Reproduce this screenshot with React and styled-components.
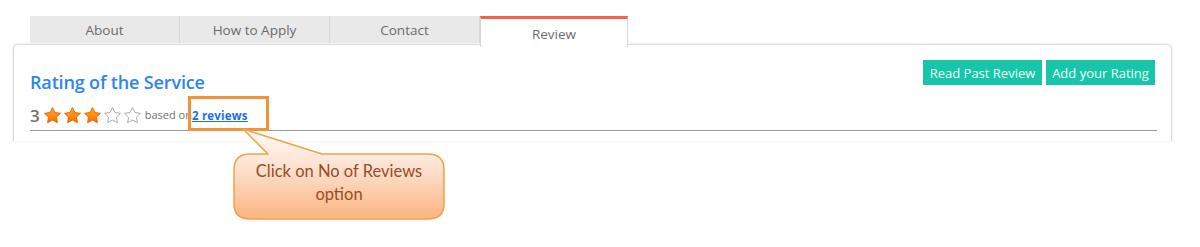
import React from 'react';
import styled, { createGlobalStyle } from 'styled-components';

const GlobalStyle = createGlobalStyle`
  html, body {
    margin: 0;
    padding: 0;
    background: #fff;
  }
  body {
    font-family: "Open Sans", "Noto Sans", sans-serif;
  }
`;

const Page = styled.div`
  position: relative;
  width: 1200px;
  height: 247px;
  padding-top: 16px;
  box-sizing: border-box;
  overflow: hidden;
`;

const Tabs = styled.div`
  display: flex;
  margin-left: 30px;
  height: 28px;
  position: relative;
  z-index: 2;
`;

const Tab = styled.div`
  width: ${p => (p.active ? '146px' : '149px')};
  height: ${p => (p.active ? '26px' : '27px')};
  box-sizing: content-box;
  display: flex;
  align-items: center;
  justify-content: center;
  font-size: 13.5px;
  color: #6b6b6b;
  background: ${p => (p.active ? '#fff' : '#e9e9e9')};
  border-right: 1px solid ${p => (p.active ? '#d6d6d6' : '#d9d9d9')};
  border-left: ${p => (p.active ? '1px solid #d6d6d6' : 'none')};
  border-top: ${p => (p.active ? '3px solid #f5614a' : 'none')};
  padding-top: ${p => (p.active ? '2px' : '0')};
  margin-bottom: ${p => (p.active ? '-1px' : '0')};
  &:last-child {
    border-right: 1px solid #d6d6d6;
  }
`;

const Panel = styled.div`
  margin-left: 13px;
  width: 1159px;
  height: 97px;
  box-sizing: border-box;
  background: #fff;
  border: 1px solid #dcdcdc;
  border-bottom: none;
  border-radius: 5px 5px 0 0;
  box-shadow: 0 0 3px rgba(0, 0, 0, 0.12);
  padding: 15px 16px 0 16px;
`;

const Header = styled.div`
  display: flex;
  justify-content: space-between;
  align-items: flex-start;
`;

const Title = styled.h2`
  margin: 10px 0 0;
  font-size: 18px;
  line-height: 24px;
  font-weight: 600;
  color: #2b84f5;
  letter-spacing: -0.15px;
`;

const Actions = styled.div`
  display: flex;
  gap: 4px;
`;

const ActionButton = styled.button`
  height: 25px;
  width: ${p => p.w}px;
  border: none;
  background: #17c5a8;
  color: #effffb;
  font-family: "Open Sans", "Noto Sans", sans-serif;
  font-size: 13px;
  font-weight: 500;
  padding: 0;
  cursor: pointer;
`;

const RatingRow = styled.div`
  display: flex;
  align-items: center;
  height: 24px;
  margin-top: 9px;
  padding-bottom: 3px;
  border-bottom: 1px solid #9a9a9a;
  margin-right: -2px;
`;

const Score = styled.span`
  font-size: 17px;
  font-weight: 600;
  color: #707070;
  margin-right: 3px;
  line-height: 1;
`;

const Stars = styled.div`
  display: flex;
  gap: 1px;
  margin-right: 3px;
`;

const BasedOn = styled.span`
  font-size: 11px;
  color: #6f6f6f;
  margin-top: -2px;
`;

const LinkWrap = styled.span`
  position: relative;
  margin-left: 0;
  margin-top: -2px;
`;

const ReviewsLink = styled.a`
  font-size: 11.5px;
  font-weight: 700;
  color: #1a6fe8;
  text-decoration: underline;
  letter-spacing: 0.2px;
`;

const Highlight = styled.span`
  position: absolute;
  left: -4px;
  right: -21px;
  top: -7px;
  bottom: -6px;
  border: 3px solid #f29239;
  pointer-events: none;
`;

const Callout = styled.div`
  position: absolute;
  left: 230px;
  top: 126px;
  width: 220px;
  height: 100px;
`;

const CalloutShape = styled.svg`
  position: absolute;
  inset: 0;
`;

const CalloutText = styled.div`
  position: absolute;
  left: 4px;
  right: 6px;
  top: 34px;
  text-align: center;
  font-family: Lato, "Open Sans", sans-serif;
  font-size: 16.5px;
  line-height: 23px;
  color: #9b4b25;
`;

function Star({ filled }) {
  return (
    <svg width="19" height="19" viewBox="0 0 24 24">
      <defs>
        <linearGradient id="starFill" x1="0" y1="0" x2="0" y2="1">
          <stop offset="0" stopColor="#ffae2a" />
          <stop offset="1" stopColor="#ff6a00" />
        </linearGradient>
      </defs>
      <path
        d="M12 2l3.09 6.26L22 9.27l-5 4.87 1.18 6.88L12 17.77l-6.18 3.25L7 14.14 2 9.27l6.91-1.01L12 2z"
        fill={filled ? 'url(#starFill)' : '#fff'}
        stroke={filled ? '#e86400' : '#a8a8a8'}
        strokeWidth="1.2"
        strokeLinejoin="round"
      />
    </svg>
  );
}

export default function App() {
  const rating = 3;
  return (
    <Page>
      <GlobalStyle />
      <Tabs>
        <Tab>About</Tab>
        <Tab>How to Apply</Tab>
        <Tab>Contact</Tab>
        <Tab active>Review</Tab>
      </Tabs>
      <Panel>
        <Header>
          <Title>Rating of the Service</Title>
          <Actions>
            <ActionButton w={119}>Read Past Review</ActionButton>
            <ActionButton w={109}>Add your Rating</ActionButton>
          </Actions>
        </Header>
        <RatingRow>
          <Score>{rating}</Score>
          <Stars>
            {[1, 2, 3, 4, 5].map(i => (
              <Star key={i} filled={i <= rating} />
            ))}
          </Stars>
          <BasedOn>based on</BasedOn>
          <LinkWrap>
            <ReviewsLink href="#">2 reviews</ReviewsLink>
            <Highlight />
          </LinkWrap>
        </RatingRow>
      </Panel>
      <Callout>
        <CalloutShape width="220" height="100" viewBox="0 0 220 100">
          <defs>
            <linearGradient id="calloutFill" x1="0" y1="0" x2="0" y2="1">
              <stop offset="0" stopColor="#fffaf6" />
              <stop offset="0.45" stopColor="#fde0cd" />
              <stop offset="1" stopColor="#fbb47f" />
            </linearGradient>
          </defs>
          <path
            d="M20 28 L38 28 L13 3 L92 28 L198 28 Q214 28 214 44 L214 78 Q214 93 198 93 L20 93 Q4 93 4 78 L4 44 Q4 28 20 28 Z"
            fill="url(#calloutFill)"
            stroke="#f4a146"
            strokeWidth="1.5"
            strokeLinejoin="round"
          />
        </CalloutShape>
        <CalloutText>
          Click on No of Reviews
          <br />
          option
        </CalloutText>
      </Callout>
    </Page>
  );
}
